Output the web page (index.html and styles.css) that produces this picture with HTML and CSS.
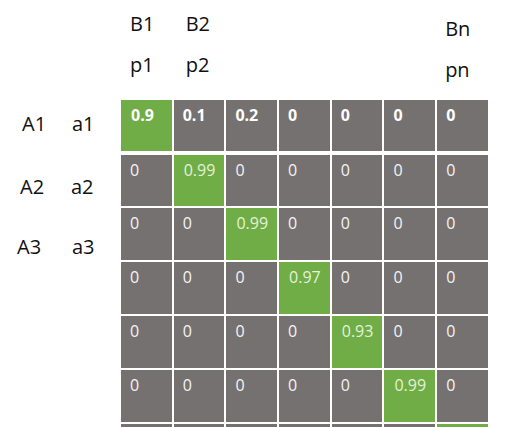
FILE: index.html
```html
<!DOCTYPE html>
<html>
<head>
<meta charset="utf-8">
<link rel="stylesheet" href="styles.css">
</head>
<body>
<div class="page">
  <div class="head">
    <div class="hrow">
      <span class="h">B1</span><span class="h">B2</span><span class="h"></span><span class="h"></span><span class="h"></span><span class="h"></span><span class="h last">Bn</span>
    </div>
    <div class="hrow prow">
      <span class="h">p1</span><span class="h">p2</span><span class="h"></span><span class="h"></span><span class="h"></span><span class="h"></span><span class="h last">pn</span>
    </div>
  </div>
  <div class="body">
    <div class="side">
      <div class="lab r1"><span class="big">A1</span><span class="small">a1</span></div>
      <div class="lab r2"><span class="big">A2</span><span class="small">a2</span></div>
      <div class="lab r3"><span class="big">A3</span><span class="small">a3</span></div>
    </div>
    <div class="matrix">
      <div class="c g b">0.9</div><div class="c b">0.1</div><div class="c b">0.2</div><div class="c b">0</div><div class="c b">0</div><div class="c b">0</div><div class="c b">0</div>
      <div class="c">0</div><div class="c g">0.99</div><div class="c">0</div><div class="c">0</div><div class="c">0</div><div class="c">0</div><div class="c">0</div>
      <div class="c">0</div><div class="c">0</div><div class="c g">0.99</div><div class="c">0</div><div class="c">0</div><div class="c">0</div><div class="c">0</div>
      <div class="c">0</div><div class="c">0</div><div class="c">0</div><div class="c g">0.97</div><div class="c">0</div><div class="c">0</div><div class="c">0</div>
      <div class="c">0</div><div class="c">0</div><div class="c">0</div><div class="c">0</div><div class="c g">0.93</div><div class="c">0</div><div class="c">0</div>
      <div class="c">0</div><div class="c">0</div><div class="c">0</div><div class="c">0</div><div class="c">0</div><div class="c g">0.99</div><div class="c">0</div>
      <div class="c"></div><div class="c"></div><div class="c"></div><div class="c"></div><div class="c"></div><div class="c"></div><div class="c g"></div>
    </div>
  </div>
</div>
</body>
</html>
```

FILE: styles.css
```css
html, body {
  margin: 0;
  padding: 0;
  background: #ffffff;
  overflow: hidden;
}
body {
  font-family: "Open Sans", "DejaVu Sans", sans-serif;
  color: #111111;
  width: 515px;
  height: 427px;
}
.page {
  display: flex;
  flex-direction: column;
}
.head {
  height: 100px;
  box-sizing: border-box;
  padding-top: 10px;
  padding-left: 121px;
  display: flex;
  flex-direction: column;
  gap: 13px;
}
.hrow {
  display: grid;
  grid-template-columns: repeat(7, 50.7px);
  column-gap: 2px;
  font-size: 20px;
  line-height: 28px;
  height: 28px;
}
.h {
  padding-left: 9px;
}
.h:nth-child(2) {
  padding-left: 12px;
}
.h.last {
  padding-left: 8px;
  margin-top: 5px;
}
.body {
  display: flex;
}
.side {
  width: 121px;
  display: flex;
  flex-direction: column;
  padding-top: 10px;
  font-size: 20px;
  line-height: 28px;
}
.lab {
  display: flex;
}
.r1 { padding-left: 22px; }
.r1 .big { width: 50px; }
.r2 { padding-left: 20px; margin-top: 35px; }
.r2 .big { width: 51px; }
.r3 { padding-left: 17px; margin-top: 32px; }
.r3 .big { width: 55px; }
.matrix {
  display: grid;
  grid-template-columns: repeat(7, 50.7px);
  grid-auto-rows: 52px;
  gap: 2px;
  background: #ffffff;
}
.c {
  background: #767171;
  color: #f4f4f4;
  font-size: 16px;
  line-height: 22px;
  padding: 4px 0 0 9px;
  box-sizing: border-box;
}
.c.g {
  background: #70ad47;
  color: #e4f2d6;
  padding-left: 10px;
}
.c.b {
  font-weight: 700;
  color: #ffffff;
  margin-bottom: 1px;
}
.matrix .c:nth-child(n+8):nth-child(-n+14) {
  margin-top: 1px;
}
```
